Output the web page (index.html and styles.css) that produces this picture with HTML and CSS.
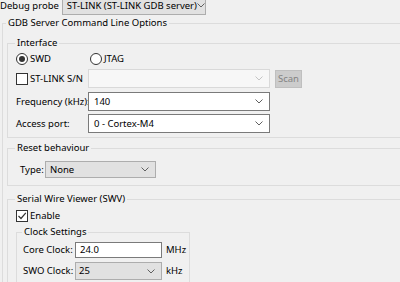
FILE: index.html
```html
<!DOCTYPE html>
<html lang="en">
<head>
  <meta charset="UTF-8">
  <title>Debugger settings</title>
  <link rel="stylesheet" href="styles.css">
</head>
<body>
  <div class="probe">
    <span class="probe-label">Debug probe</span>
    <div class="combo probe-combo">
      <span>ST-LINK (ST-LINK GDB server)</span>
      <svg class="chev" width="8" height="5" viewBox="0 0 8 5"><path d="M0.5 0.5L4 4L7.5 0.5" fill="none" stroke="#606060"/></svg>
    </div>
  </div>

  <fieldset class="gdb">
    <legend>GDB Server Command Line Options</legend>

    <fieldset class="group">
      <legend>Interface</legend>
      <div class="group-body">
        <div class="row radios">
          <label class="radio-item swd"><span class="radio"><span class="dot"></span></span>SWD</label>
          <label class="radio-item"><span class="radio"></span>JTAG</label>
        </div>
        <div class="row row-sn">
          <label class="field-label check-item"><span class="check"></span>ST-LINK S/N</label>
          <div class="combo off wide">
            <span></span>
            <svg class="chev" width="8" height="5" viewBox="0 0 8 5"><path d="M0.5 0.5L4 4L7.5 0.5" fill="none" stroke="#c4c4c4"/></svg>
          </div>
          <button class="scan" disabled>Scan</button>
        </div>
        <div class="row row-freq">
          <span class="field-label">Frequency (kHz):</span>
          <div class="combo edit wide">
            <span>140</span>
            <svg class="chev" width="8" height="5" viewBox="0 0 8 5"><path d="M0.5 0.5L4 4L7.5 0.5" fill="none" stroke="#606060"/></svg>
          </div>
        </div>
        <div class="row row-port">
          <span class="field-label">Access port:</span>
          <div class="combo edit wide">
            <span>0 - Cortex-M4</span>
            <svg class="chev" width="8" height="5" viewBox="0 0 8 5"><path d="M0.5 0.5L4 4L7.5 0.5" fill="none" stroke="#606060"/></svg>
          </div>
        </div>
      </div>
    </fieldset>

    <fieldset class="group reset">
      <legend>Reset behaviour</legend>
      <div class="group-body reset-body">
        <div class="row row-type">
          <span class="type-label">Type:</span>
          <div class="combo type-combo">
            <span>None</span>
            <svg class="chev" width="8" height="5" viewBox="0 0 8 5"><path d="M0.5 0.5L4 4L7.5 0.5" fill="none" stroke="#606060"/></svg>
          </div>
        </div>
      </div>
    </fieldset>

    <fieldset class="group swv">
      <legend>Serial Wire Viewer (SWV)</legend>
      <div class="group-body">
        <div class="row row-enable">
          <label class="check-item"><span class="check">
            <svg width="10" height="10" viewBox="0 0 10 10"><path d="M1.5 5L4 7.5L8.8 1.8" fill="none" stroke="#333" stroke-width="1.2"/></svg>
          </span>Enable</label>
        </div>
      </div>
      <fieldset class="clock">
        <legend>Clock Settings</legend>
        <div class="clock-body">
          <div class="row row-core">
            <span class="clock-label">Core Clock:</span>
            <div class="text-input">24.0</div>
            <span class="unit">MHz</span>
          </div>
          <div class="row row-swo">
            <span class="clock-label">SWO Clock:</span>
            <div class="combo swo-combo">
              <span>25</span>
              <svg class="chev" width="8" height="5" viewBox="0 0 8 5"><path d="M0.5 0.5L4 4L7.5 0.5" fill="none" stroke="#606060"/></svg>
            </div>
            <span class="unit">kHz</span>
          </div>
        </div>
      </fieldset>
    </fieldset>
  </fieldset>
</body>
</html>
```

FILE: styles.css
```css
* {
  box-sizing: border-box;
}

body {
  margin: 0;
  width: 400px;
  height: 282px;
  overflow: hidden;
  background: #f0f0f0;
  color: #000;
  font-family: "Noto Sans", sans-serif;
  font-size: 9.5px;
  line-height: 16px;
}

/* top probe selector, partly cut off by the window */
.probe {
  display: flex;
  align-items: center;
  height: 19px;
  margin-top: -4px;
}
.probe-label {
  flex: none;
  margin-right: 3px;
  white-space: nowrap;
}
.probe-combo {
  width: 144px;
  height: 19px;
  padding-left: 4px;
  padding-right: 8px;
}

/* combo boxes */
.combo {
  flex: none;
  display: flex;
  align-items: center;
  justify-content: space-between;
  height: 19px;
  padding: 0 6px 0 4px;
  border: 1px solid #adadad;
  background: #e1e1e1;
  white-space: nowrap;
}
.combo.edit {
  background: #fff;
  border-color: #7a7a7a;
}
.combo.off {
  background: #f7f7f7;
  border-color: #d9d9d9;
}
.chev {
  flex: none;
}

/* group boxes */
fieldset {
  margin: 0;
  padding: 0;
  min-width: 0;
  border: 1px solid #dcdcdc;
}
legend {
  padding: 0 2px;
  line-height: 16px;
}
.gdb {
  width: 560px;
  height: 400px;
  margin-left: 2px;
}
.gdb > legend {
  margin-left: 3px;
}
.group {
  margin: 4px 0 0 4px;
}
.group > legend {
  margin-left: 7px;
}
.group-body {
  padding: 0 0 4px 8px;
}
.reset {
  margin-top: 2px;
}
.reset-body {
  padding: 0 0 7px 12px;
}
.swv {
  margin-top: 5px;
}
.swv .group-body {
  padding-bottom: 0;
}

.row {
  display: flex;
  align-items: center;
}
.radios {
  height: 16px;
}
.row-sn {
  height: 19px;
  margin-top: 2px;
}
.row-freq {
  height: 19px;
  margin-top: 4px;
}
.row-port {
  height: 19px;
  margin-top: 3px;
}
.field-label {
  flex: none;
  width: 72px;
  white-space: nowrap;
}
.wide {
  width: 182px;
  padding-left: 5px;
}

/* radios and check boxes */
.radio-item,
.check-item {
  display: flex;
  align-items: center;
  gap: 1px;
  white-space: nowrap;
}
.swd {
  width: 74px;
}
.radio {
  flex: none;
  display: flex;
  align-items: center;
  justify-content: center;
  width: 12px;
  height: 12px;
  margin-right: 1px;
  border: 1px solid #333;
  border-radius: 50%;
  background: #fff;
}
.dot {
  width: 6px;
  height: 6px;
  border-radius: 50%;
  background: #333;
}
.check {
  flex: none;
  display: flex;
  align-items: center;
  justify-content: center;
  width: 12px;
  height: 12px;
  margin-right: 1px;
  border: 1px solid #333;
  background: #fff;
}

.scan {
  flex: none;
  height: 18px;
  width: 27px;
  margin-left: 5px;
  padding: 0;
  border: 1px solid #bfbfbf;
  background: #cccccc;
  color: #838383;
  font: inherit;
}

/* reset behaviour */
.row-type {
  height: 17px;
  margin-top: 5px;
}
.type-label {
  flex: none;
  width: 25px;
}
.type-combo {
  width: 111px;
  height: 17px;
}

/* SWV */
.row-enable {
  height: 16px;
  margin-top: 1px;
}
.clock {
  width: 174px;
  margin-left: 8px;
}
.clock > legend {
  margin-left: 5px;
}
.clock-body {
  padding: 0 0 6px 6px;
}
.clock-label {
  flex: none;
  width: 52px;
  white-space: nowrap;
}
.row-core {
  height: 16px;
  margin-top: 2px;
}
.row-swo {
  height: 18px;
  margin-top: 4px;
}
.text-input {
  flex: none;
  width: 87px;
  height: 16px;
  padding-left: 4px;
  border: 1px solid #7a7a7a;
  background: #fff;
  line-height: 14px;
}
.swo-combo {
  width: 87px;
  height: 18px;
  padding-left: 3px;
}
.unit {
  flex: none;
  margin-left: 4px;
}
```
